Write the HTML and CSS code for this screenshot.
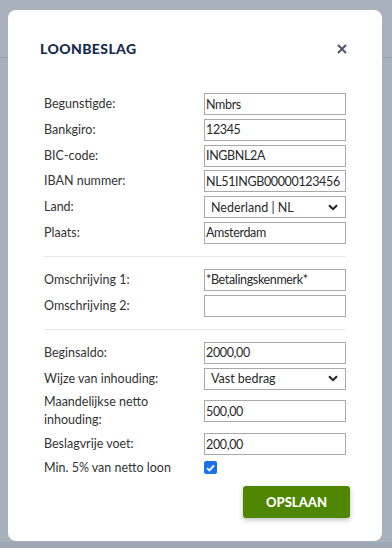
FILE: index.html
```html
<!DOCTYPE html>
<html lang="nl">
<head>
    <meta charset="UTF-8">
    <meta name="viewport" content="width=device-width, initial-scale=1.0">
    <title>Loonbeslag</title>
    <link rel="stylesheet" href="styles.css">
</head>
<body>
    <div class="backdrop">
        <div class="modal">
            <div class="modal-header">
                <h2>LOONBESLAG</h2>
                <svg class="close" width="10" height="10" viewBox="0 0 10 10"><path d="M1 1 L9 9 M9 1 L1 9" stroke="#4b5766" stroke-width="2" fill="none"/></svg>
            </div>
            <div class="section first">
                <div class="form-row">
                    <label for="begunstigde">Begunstigde:</label>
                    <input type="text" id="begunstigde" value="Nmbrs">
                </div>
                <div class="form-row">
                    <label for="bankgiro">Bankgiro:</label>
                    <input type="text" id="bankgiro" value="12345">
                </div>
                <div class="form-row">
                    <label for="bic">BIC-code:</label>
                    <input type="text" id="bic" value="INGBNL2A">
                </div>
                <div class="form-row">
                    <label for="iban">IBAN nummer:</label>
                    <input type="text" id="iban" value="NL51INGB00000123456">
                </div>
                <div class="form-row">
                    <label>Land:</label>
                    <div class="select">
                        <span>Nederland | NL</span>
                        <svg width="10" height="7" viewBox="0 0 10 7"><path d="M1 1.2 L5 5.2 L9 1.2" fill="none" stroke="#222" stroke-width="2"/></svg>
                    </div>
                </div>
                <div class="form-row">
                    <label for="plaats">Plaats:</label>
                    <input type="text" id="plaats" value="Amsterdam">
                </div>
            </div>
            <div class="section">
                <div class="form-row">
                    <label for="omschr1">Omschrijving 1:</label>
                    <input type="text" id="omschr1" value="*Betalingskenmerk*">
                </div>
                <div class="form-row">
                    <label for="omschr2">Omschrijving 2:</label>
                    <input type="text" id="omschr2" value="">
                </div>
            </div>
            <div class="section last">
                <div class="form-row">
                    <label for="beginsaldo">Beginsaldo:</label>
                    <input type="text" id="beginsaldo" value="2000,00">
                </div>
                <div class="form-row">
                    <label>Wijze van inhouding:</label>
                    <div class="select">
                        <span>Vast bedrag</span>
                        <svg width="10" height="7" viewBox="0 0 10 7"><path d="M1 1.2 L5 5.2 L9 1.2" fill="none" stroke="#222" stroke-width="2"/></svg>
                    </div>
                </div>
                <div class="form-row tall">
                    <label for="netto">Maandelijkse netto inhouding:</label>
                    <input type="text" id="netto" value="500,00">
                </div>
                <div class="form-row">
                    <label for="voet">Beslagvrije voet:</label>
                    <input type="text" id="voet" value="200,00">
                </div>
                <div class="form-row check-row">
                    <label>Min. 5% van netto loon</label>
                    <span class="checkbox">
                        <svg width="9" height="8" viewBox="0 0 9 8"><path d="M1 4.2 L3.4 6.4 L8 1.4" fill="none" stroke="#fff" stroke-width="1.8"/></svg>
                    </span>
                </div>
            </div>
            <div class="actions">
                <button>OPSLAAN</button>
            </div>
        </div>
    </div>
</body>
</html>
```

FILE: styles.css
```css
body {
    margin: 0;
    padding: 0;
    font-family: Lato, "Noto Sans", sans-serif;
    background-color: #9ca8b3;
}

.backdrop {
    height: 542px;
    padding: 10px 10px 0 8px;
    box-sizing: border-box;
    background: linear-gradient(#a9b2ba 0, #a9b2ba 57px, #9aa5b0 57px, #9aa5b0 58px, #a7b1ba 58px);
}

.modal {
    background-color: white;
    border-radius: 8px;
    height: 531px;
    padding: 0 36px;
    box-sizing: border-box;
}

.modal-header {
    display: flex;
    justify-content: space-between;
    align-items: center;
    padding-top: 30px;
    margin-left: -4px;
    height: 17px;
}

.modal-header h2 {
    margin: 0;
    font-size: 14px;
    font-weight: 900;
    letter-spacing: 0.4px;
    line-height: 17px;
    color: #162b4d;
}

.close {
    margin-right: -1px;
}

.section {
    border-bottom: 1px solid #e8e8e8;
    padding: 12px 0 12px;
}

.section.first {
    padding-top: 36px;
}

.section.last {
    border-bottom: none;
    padding-bottom: 0;
}

.form-row {
    display: flex;
    align-items: center;
    justify-content: space-between;
    margin-bottom: 3.8px;
}

.form-row:last-child {
    margin-bottom: 0;
}

.form-row label {
    font-size: 12.5px;
    color: #333;
    line-height: 22px;
}

.form-row.tall label {
    width: 120px;
    line-height: 18px;
}

.form-row input,
.select {
    width: 142px;
    height: 22px;
    box-sizing: border-box;
    border: 1px solid #a9a9a9;
    padding: 0 1px;
    font-family: inherit;
    font-size: 12.5px;
    letter-spacing: -0.35px;
    color: #2a2a2a;
    margin: 0;
}

.select {
    display: flex;
    align-items: center;
    justify-content: space-between;
    padding: 0 7px 0 6px;
    letter-spacing: 0;
}

.check-row {
    margin-top: -1px;
}

.check-row label {
    line-height: 20px;
}

.checkbox {
    display: flex;
    align-items: center;
    justify-content: center;
    width: 13px;
    height: 13px;
    border-radius: 2px;
    background-color: #1a73e8;
    margin-right: 129px;
}

.actions {
    display: flex;
    justify-content: flex-end;
    margin-top: 8px;
}

button {
    background-color: #4e8600;
    color: white;
    font-family: inherit;
    font-weight: 900;
    font-size: 13px;
    border: none;
    border-radius: 3px;
    width: 107px;
    height: 32px;
    margin-right: -4px;
    box-shadow: 0 2px 5px rgba(0, 0, 0, 0.25);
}
```
